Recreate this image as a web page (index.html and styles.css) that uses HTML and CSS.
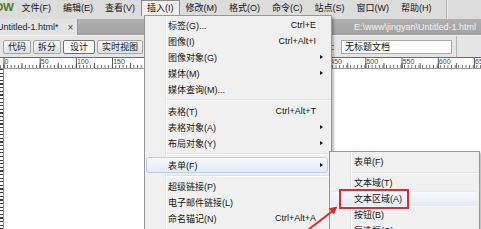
FILE: index.html
```html
<!DOCTYPE html>
<html>
<head>
<meta charset="utf-8">
<link rel="stylesheet" href="styles.css">
</head>
<body>
<div class="app">
  <div class="menubar">
    <span class="logo">DW</span>
    <span class="mb-item first">文件(F)</span>
    <span class="mb-item">编辑(E)</span>
    <span class="mb-item">查看(V)</span>
    <span class="mb-item active">插入(I)</span>
    <span class="mb-item">修改(M)</span>
    <span class="mb-item">格式(O)</span>
    <span class="mb-item">命令(C)</span>
    <span class="mb-item">站点(S)</span>
    <span class="mb-item">窗口(W)</span>
    <span class="mb-item">帮助(H)</span>
    <span class="mb-sep"></span>
  </div>
  <div class="tabbar">
    <div class="tab"><span class="tab-name">Untitled-1.html*</span><span class="tab-close">×</span></div>
    <div class="doc-path">E:\www\jingyan\Untitled-1.html</div>
  </div>
  <div class="toolbar">
    <span class="tb-btn">代码</span>
    <span class="tb-btn">拆分</span>
    <span class="tb-btn on">设计</span>
    <span class="tb-btn">实时视图</span>
    <span class="tb-spacer"></span>
    <span class="tb-label">标题:</span>
    <span class="tb-input">无标题文档</span>
    <span class="tb-div"></span>
  </div>
  <div class="ruler">
    <div class="ruler-nums">
      <span>0</span><span>50</span><span>100</span><span>150</span><span>200</span><span>250</span><span>300</span><span>350</span><span>400</span><span>450</span><span>500</span><span>550</span><span>600</span><span>650</span>
    </div>
  </div>
  <div class="work">
    <div class="vruler"></div>
    <div class="page"></div>
  </div>
</div>

<div class="dropdown">
  <div class="mi"><span class="lbl">标签(G)...</span><span class="sc">Ctrl+E</span><span class="ar"></span></div>
  <div class="mi"><span class="lbl">图像(I)</span><span class="sc">Ctrl+Alt+I</span><span class="ar"></span></div>
  <div class="mi"><span class="lbl">图像对象(G)</span><span class="sc"></span><span class="ar sub"></span></div>
  <div class="mi"><span class="lbl">媒体(M)</span><span class="sc"></span><span class="ar sub"></span></div>
  <div class="mi"><span class="lbl">媒体查询(M)...</span><span class="sc"></span><span class="ar"></span></div>
  <div class="sep"></div>
  <div class="mi"><span class="lbl">表格(T)</span><span class="sc">Ctrl+Alt+T</span><span class="ar"></span></div>
  <div class="mi"><span class="lbl">表格对象(A)</span><span class="sc"></span><span class="ar sub"></span></div>
  <div class="mi"><span class="lbl">布局对象(Y)</span><span class="sc"></span><span class="ar sub"></span></div>
  <div class="sep"></div>
  <div class="mi hot"><span class="lbl">表单(F)</span><span class="sc"></span><span class="ar sub"></span></div>
  <div class="sep tight"></div>
  <div class="mi"><span class="lbl">超级链接(P)</span><span class="sc"></span><span class="ar"></span></div>
  <div class="mi"><span class="lbl">电子邮件链接(L)</span><span class="sc"></span><span class="ar"></span></div>
  <div class="mi"><span class="lbl">命名锚记(N)</span><span class="sc">Ctrl+Alt+A</span><span class="ar"></span></div>
  <div class="mi"><span class="lbl">日期(D)</span><span class="sc"></span><span class="ar"></span></div>
</div>

<div class="submenu">
  <div class="si">表单(F)</div>
  <div class="ssep"></div>
  <div class="si">文本域(T)</div>
  <div class="si hot">文本区域(A)</div>
  <div class="si">按钮(B)</div>
  <div class="si">复选框(C)</div>
</div>

<div class="mark"></div>
<svg class="arrow" width="60" height="40" viewBox="290 200 60 40">
  <line x1="304" y1="233" x2="332" y2="211.5" stroke="#e3292c" stroke-width="2"/>
  <polygon points="337.5,206.5 333.8,214.5 328.8,208.3" fill="#e3292c"/>
</svg>
</body>
</html>
```
FILE: styles.css
```css
* { box-sizing: border-box; }
html, body { margin: 0; padding: 0; }
body {
  width: 481px;
  height: 229px;
  overflow: hidden;
  position: relative;
  background: #fff;
  font-family: "Liberation Sans", "Noto Sans CJK SC", sans-serif;
  font-size: 9px;
  color: #141414;
}
.app { display: flex; flex-direction: column; height: 229px; }

/* menubar */
.menubar {
  height: 19px;
  flex: none;
  display: flex;
  align-items: flex-start;
  background: #dcdcdc;
  overflow: hidden;
}
.logo {
  font-weight: bold;
  font-size: 11.5px;
  line-height: 15px;
  color: #4b7b20;
  margin-left: -5px;
  margin-right: 1px;
  letter-spacing: -0.3px;
}
.mb-item {
  height: 16px;
  line-height: 14px;
  padding: 0 5px;
  border: 1px solid transparent;
  border-bottom: none;
  white-space: nowrap;
}
.mb-item.first { margin-left: 1px; }
.mb-item.active {
  border-color: #8c8c8c;
  background: #eeeeee;
}
.mb-sep {
  width: 1px;
  height: 19px;
  margin-left: 8px;
  background: #b5b5b5;
  box-shadow: 1px 0 0 #ececec;
}

/* tabs */
.tabbar {
  height: 16px;
  flex: none;
  display: flex;
  background: linear-gradient(#b0b0b0, #a2a2a2);
}
.tab {
  width: 78px;
  display: flex;
  align-items: center;
  background: #e3e3e3;
  border-right: 1px solid #9a9a9a;
  overflow: hidden;
}
.tab-name { margin-left: -3px; white-space: nowrap; color: #1e1e1e; }
.tab-close { margin-left: 9px; font-size: 10px; color: #444; }
.doc-path {
  flex: 1;
  text-align: right;
  padding-right: 5px;
  line-height: 16px;
  color: #f4f4f4;
  white-space: nowrap;
}

/* toolbar */
.toolbar {
  height: 22px;
  flex: none;
  display: flex;
  align-items: center;
  gap: 2px;
  padding-left: 3px;
  background: #e5e5e5;
  border-top: 1px solid #f4f4f4;
}
.tb-btn {
  height: 14px;
  line-height: 12px;
  padding: 0 4px;
  border: 1px solid #a4a4a4;
  border-radius: 2px;
  background: linear-gradient(#f8f8f8, #e0e0e0);
  white-space: nowrap;
}
.tb-btn.on {
  background: #fff;
  border-color: #6e6e6e;
  padding: 0 6px;
}
.tb-spacer { flex: 1; }
.tb-label { margin-right: 5px; white-space: nowrap; }
.tb-input {
  width: 111px;
  height: 14px;
  line-height: 12px;
  padding-left: 3px;
  background: #fff;
  border: 1px solid #a9a9a9;
  white-space: nowrap;
}
.tb-div {
  width: 1px;
  height: 22px;
  margin-left: 2px;
  margin-right: 24px;
  background: #b4b4b4;
}

/* ruler */
.ruler {
  height: 12px;
  flex: none;
  border-top: 1px solid #6a6a6a;
  border-bottom: 1px solid #9a9a9a;
  background-color: #fff;
  background-image:
    linear-gradient(to right, #555 1px, transparent 1px),
    linear-gradient(to right, #555 1px, transparent 1px),
    linear-gradient(to right, #666 1px, transparent 1px);
  background-size: 36.2px 100%, 18.1px 5px, 3.62px 3px;
  background-position: 3.5px 0, 3.5px 100%, 3.5px 100%;
  background-repeat: repeat-x;
  overflow: hidden;
}
.ruler-nums { display: flex; margin-left: 4.6px; }
.ruler-nums span {
  flex: none;
  width: 36.2px;
  font-size: 7px;
  line-height: 7px;
  color: #4a4a52;
}

/* work area */
.work { flex: 1; display: flex; }
.vruler {
  width: 4px;
  border-right: 1px solid #8a8a8a;
  background: repeating-linear-gradient(to bottom, #3a3a3a 0 1.2px, #fff 1.2px 3.62px);
}
.page { flex: 1; background: #fff; }

/* dropdown */
.dropdown {
  position: absolute;
  left: 144px;
  top: 15px;
  width: 188px;
  height: 230px;
  padding-top: 1px;
  border: 1px solid #979797;
  background:
    linear-gradient(to right, transparent 20px, #e2e3e3 20px, #e2e3e3 21px, #fff 21px, #fff 22px, transparent 22px),
    #f0f0f0;
  box-shadow: 2px 2px 2px rgba(0,0,0,0.25);
}
.mi {
  height: 16px;
  margin: 0 3px 0 1px;
  display: flex;
  align-items: center;
  padding-left: 21px;
  border: 1px solid transparent;
  border-radius: 3px;
  white-space: nowrap;
}
.mi .lbl { flex: 1; }
.mi .ar { width: 11px; height: 5px; position: relative; flex: none; }
.mi .ar.sub::after {
  content: "";
  position: absolute;
  left: 4px;
  top: 0;
  border-left: 3px solid #111;
  border-top: 2.5px solid transparent;
  border-bottom: 2.5px solid transparent;
}
.hot {
  border-color: #b9cfec;
  background: linear-gradient(#f6f9fd, #e3ebf6);
}
.sep {
  height: 6px;
  margin-left: 22px;
  background: linear-gradient(transparent 2px, #e0e0e0 2px, #e0e0e0 3px, #fff 3px, #fff 4px, transparent 4px);
}
.sep.tight { height: 5px; }

/* submenu */
.submenu {
  position: absolute;
  left: 329px;
  top: 151px;
  width: 151px;
  height: 90px;
  padding-top: 2px;
  border: 1px solid #979797;
  background:
    linear-gradient(to right, transparent 20px, #e2e3e3 20px, #e2e3e3 21px, #fff 21px, #fff 22px, transparent 22px),
    #f0f0f0;
  box-shadow: 2px 2px 2px rgba(0,0,0,0.25);
}
.si {
  height: 16px;
  line-height: 14px;
  margin: 0 2px 0 1px;
  padding-left: 22px;
  border: 1px solid transparent;
  border-radius: 3px;
  white-space: nowrap;
}
.ssep {
  height: 5px;
  margin-left: 22px;
  background: linear-gradient(transparent 2px, #e0e0e0 2px, #e0e0e0 3px, #fff 3px, #fff 4px, transparent 4px);
}

/* annotations */
.mark {
  position: absolute;
  left: 339px;
  top: 189px;
  width: 70px;
  height: 20px;
  border: 2px solid #e3292c;
}
.arrow {
  position: absolute;
  left: 290px;
  top: 200px;
}
```
